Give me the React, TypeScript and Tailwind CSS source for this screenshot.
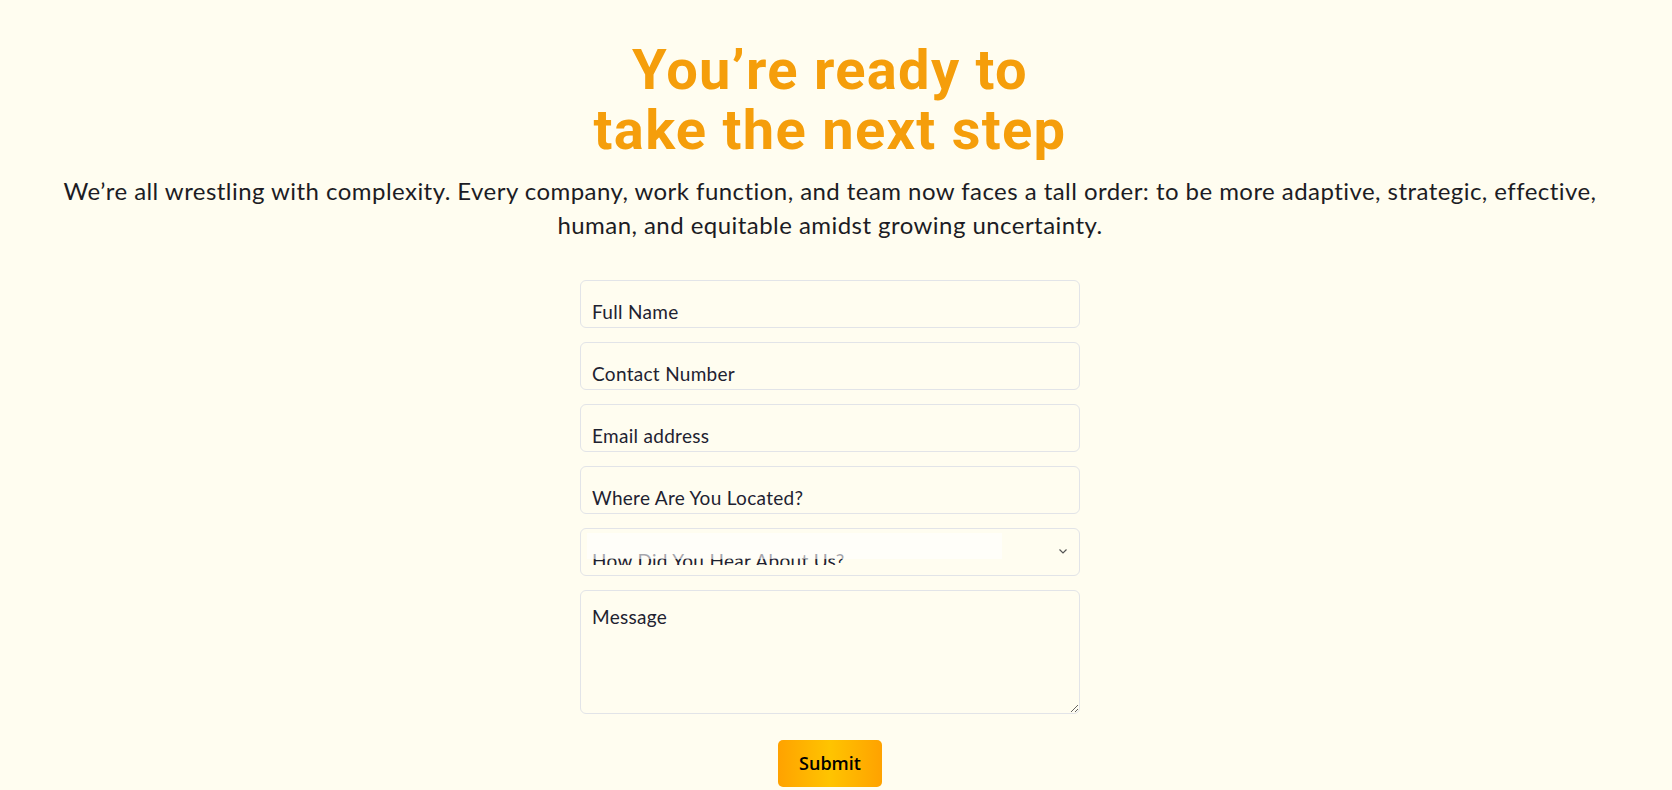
import { useState } from "react";

const fieldText =
  "w-full h-12 rounded-md border border-[#e2e4e8] bg-transparent px-[11px] pt-[14px] pb-0 text-[19px] tracking-[0.3px] text-[#1e2230] placeholder:text-[#1e2230] outline-none";

export default function App() {
  const [form, setForm] = useState({ name: "", phone: "", email: "", location: "", message: "" });

  return (
    <div className="min-h-screen w-full bg-[#fffdf0] font-['Lato','Noto_Sans',sans-serif] text-[#1c1c24]">
      <section className="flex flex-col items-center pl-12 pr-[60px] pt-[40px]">
        <h1 className="text-center font-['Roboto',sans-serif] text-[56px] font-bold leading-[60px] tracking-[1.3px] text-[#f59e0b]">
          You’re ready to
          <br />
          take the next step
        </h1>
        <p className="mt-[14px] max-w-[1560px] text-center text-[24px] leading-[34px] tracking-[0.45px]">
          We’re all wrestling with complexity. Every company, work function, and team now faces a tall order: to be more
          adaptive, strategic, effective, human, and equitable amidst growing uncertainty.
        </p>

        <form className="mt-[38px] flex w-[500px] flex-col gap-[14px]" onSubmit={(e) => e.preventDefault()}>
          <input
            className={fieldText}
            placeholder="Full Name"
            value={form.name}
            onChange={(e) => setForm({ ...form, name: e.target.value })}
          />
          <input
            className={fieldText}
            placeholder="Contact Number"
            value={form.phone}
            onChange={(e) => setForm({ ...form, phone: e.target.value })}
          />
          <input
            className={fieldText}
            placeholder="Email address"
            value={form.email}
            onChange={(e) => setForm({ ...form, email: e.target.value })}
          />
          <input
            className={fieldText}
            placeholder="Where Are You Located?"
            value={form.location}
            onChange={(e) => setForm({ ...form, location: e.target.value })}
          />

          {/* select renders clipped in the original */}
          <div className="relative flex h-12 w-full items-start rounded-md border border-[#e2e4e8]">
            <div className="h-[36px] w-full overflow-hidden px-[11px] pt-[20px] text-[19px] leading-[24px] tracking-[0.3px] text-[#1e2230]">
              How Did You Hear About Us?
            </div>
            <div className="absolute left-[6px] top-[4px] h-[26px] w-[415px] bg-white/60" />
            <svg className="absolute right-[11px] top-[18px] h-[8px] w-[10px]" viewBox="0 0 10 8" fill="none">
              <path d="M1.5 2.5 5 6 8.5 2.5" stroke="#555" strokeWidth="1.2" />
            </svg>
          </div>

          <textarea
            className="h-[124px] w-full resize-y rounded-md border border-[#e2e4e8] bg-transparent px-[11px] pt-[14px] text-[19px] leading-[24px] tracking-[0.3px] text-[#1e2230] placeholder:text-[#1e2230] outline-none"
            placeholder="Message"
            value={form.message}
            onChange={(e) => setForm({ ...form, message: e.target.value })}
          />

          <div className="mt-3 flex justify-center">
            <button
              type="submit"
              className="h-[47px] w-[104px] rounded-[5px] bg-[linear-gradient(90deg,#ffa200_0%,#ffc400_50%,#ffa200_100%)] font-['Open_Sans',sans-serif] text-[18px] font-semibold text-black"
            >
              Submit
            </button>
          </div>
        </form>
      </section>
    </div>
  );
}
